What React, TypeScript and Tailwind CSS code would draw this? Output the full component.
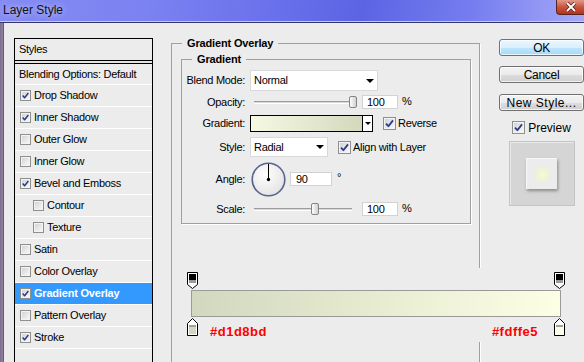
import React from "react";

function Check({ checked, small }: { checked?: boolean; small?: boolean }) {
  return (
    <span
      className={
        (small ? "w-[11px] h-[11px]" : "w-[13px] h-[13px]") +
        " relative inline-block shrink-0 border border-[#8e8f8f] bg-[linear-gradient(135deg,#d0d0d0,#fbfbfb)]"
      }
    >
      <span className="absolute inset-0 border border-[#f3f3f3]" />
      {checked && (
        <svg viewBox="0 0 11 11" className="absolute inset-0 w-full h-full">
          <path
            d="M2 5.6L4.4 8.2L9 2.4"
            fill="none"
            stroke="#2a3a8a"
            strokeWidth="1.8"
            strokeLinejoin="round"
          />
        </svg>
      )}
    </span>
  );
}

function Tri({ small }: { small?: boolean }) {
  return (
    <span
      className={
        small
          ? "w-0 h-0 border-x-[3px] border-x-transparent border-t-[3px] border-t-black"
          : "w-0 h-0 border-x-[4px] border-x-transparent border-t-[4px] border-t-black"
      }
    />
  );
}

function Slider({ thumb }: { thumb: string }) {
  return (
    <div className="relative ml-[4px] w-[104px] h-[14px]">
      <div className="absolute left-0 w-[98px] top-[6px] h-[3px] border-t border-t-[#9c9c9c] border-b border-b-white bg-[#d8d8d8]" />
      <div
        className={
          thumb +
          " absolute top-[1px] w-[8px] h-[12px] rounded-[2px] border border-[#858585] bg-[linear-gradient(90deg,#fdfdfd,#d0d0d0)]"
        }
      />
    </div>
  );
}

function NumBox({ value, wide }: { value: string; wide?: boolean }) {
  return (
    <div
      className={
        (wide ? "w-[42px] pl-[5px]" : "w-[36px] pl-[4px]") +
        " h-[14px] bg-white border border-[#d2d2d2] flex items-center leading-none"
      }
    >
      {value}
    </div>
  );
}

function Label({ children }: { children: React.ReactNode }) {
  return <div className="w-[63px] text-right shrink-0">{children}</div>;
}

function TopStop() {
  return (
    <svg width="11" height="17" viewBox="0 0 11 17">
      <path d="M0.5 0.5H10.5V12.5L5.5 16.5L0.5 12.5Z" fill="#fff" stroke="#000" />
      <rect x="2" y="2" width="7" height="6" fill="#000" />
      <rect x="2" y="8" width="7" height="3" fill="#9a9a9a" />
    </svg>
  );
}

function BottomStop({ color }: { color: string }) {
  return (
    <svg width="11" height="18" viewBox="0 0 11 18">
      <path d="M5.5 0.5L10.5 5.5V17.5H0.5V5.5Z" fill="#fff" stroke="#000" />
      <rect x="2" y="7" width="7" height="2" fill="#a0a0a0" />
      <rect x="2" y="9" width="7" height="7" fill={color} />
    </svg>
  );
}

const items: { label: string; checked?: boolean; sub?: boolean; active?: boolean }[] = [
  { label: "Drop Shadow", checked: true },
  { label: "Inner Shadow", checked: true },
  { label: "Outer Glow" },
  { label: "Inner Glow" },
  { label: "Bevel and Emboss", checked: true },
  { label: "Contour", sub: true },
  { label: "Texture", sub: true },
  { label: "Satin" },
  { label: "Color Overlay" },
  { label: "Gradient Overlay", checked: true, active: true },
  { label: "Pattern Overlay" },
  { label: "Stroke", checked: true },
];

const btn =
  "h-[17px] rounded-[3px] border flex items-center justify-center text-[12px] text-black shadow-[inset_0_0_0_1px_rgba(255,255,255,0.75)]";
const grayBtn =
  " border-[#707070] bg-[linear-gradient(#f3f3f3_0%,#ebebeb_50%,#dddddd_51%,#cfcfcf_100%)]";

export default function App() {
  return (
    <div className="relative w-[584px] h-[362px] overflow-hidden bg-[#ececec] text-black text-[11px] tracking-[-0.3px] [font-family:'Liberation_Sans',Arial,sans-serif]">
      {/* Title bar */}
      <div className="h-[21px] flex items-start justify-between bg-[linear-gradient(100deg,#858bf3_0%,#7b82f1_25%,#6b72ec_45%,#5d64e4_62%,#747cef_80%,#a4a9f7_100%)]">
        <span className="pl-[3px] pt-[3px] text-[12px] leading-[14px] tracking-normal text-[#111] [text-shadow:0_0_6px_rgba(255,255,255,0.7)]">
          Layer Style
        </span>
        <div className="w-[28px] h-[15px] rounded-bl-[4px] border-l border-b border-[#5a2520] bg-[linear-gradient(#e39a88,#c9553f_50%,#b3321e)] flex items-center justify-center">
          <svg width="12" height="10" viewBox="0 0 12 10">
            <path d="M2 1L10 9M10 1L2 9" stroke="#4a1a14" strokeWidth="3.4" />
            <path d="M2 1L10 9M10 1L2 9" stroke="#fff" strokeWidth="2" />
          </svg>
        </div>
      </div>
      <div className="h-px bg-[#c3c6fb]" />
      <div className="h-px bg-[#34356a]" />

      {/* Body */}
      <div className="flex">
        <div className="w-[4px] h-[339px] shrink-0 bg-[linear-gradient(90deg,#7d6c86,#8f82a8_60%,#4e4a66)]" />

        {/* Styles list */}
        <div className="ml-[10px] mt-[15px] w-[139px] h-[330px] shrink-0 border-l border-r border-t border-black">
          <div className="h-[22px] flex items-center pl-[4px] border-b border-black">Styles</div>
          <div className="h-[2px] bg-[#e2e2e2]" />
          <div className="h-[22px] flex items-center pl-[4px] border-t border-black border-b border-b-white">
            Blending Options: Default
          </div>
          {items.map((it) => (
            <div
              key={it.label}
              className={
                (it.sub ? "pl-[18px]" : "pl-[5px]") +
                (it.active ? " bg-[#3399ff] text-white font-bold tracking-[-0.2px]" : "") +
                " h-[22px] flex items-center gap-[3px] border-b border-white"
              }
            >
              <Check checked={it.checked} small />
              <span>{it.label}</span>
            </div>
          ))}
        </div>

        {/* Center settings */}
        <div className="ml-[18px] mt-[14px] w-[309px] shrink-0">
          <fieldset className="h-[340px] border border-[#a0a0a0] shadow-[1px_1px_0_#fff]">
            <legend className="ml-[10px] px-[5px] font-bold text-[11px] leading-[13px] tracking-[-0.15px]">
              Gradient Overlay
            </legend>
            <fieldset className="mt-[3px] ml-[9px] w-[290px] border border-[#a0a0a0] shadow-[1px_1px_0_#fff] pb-[7px]">
              <legend className="ml-[10px] px-[5px] font-bold text-[11px] leading-[13px] tracking-[-0.15px]">
                Gradient
              </legend>
              <div className="flex flex-col">
                <div className="mt-[4px] h-[21px] flex items-center">
                  <Label>Blend Mode:</Label>
                  <div className="ml-[5px] w-[128px] h-[21px] bg-white border border-[#d9d9d9] flex items-center justify-between pl-[3px] pr-[3px]">
                    <span>Normal</span>
                    <Tri />
                  </div>
                </div>
                <div className="mt-[4px] h-[14px] flex items-center">
                  <Label>Opacity:</Label>
                  <div className="ml-[5px] flex items-center">
                    <Slider thumb="left-[95px]" />
                    <div className="ml-[4px]">
                      <NumBox value="100" />
                    </div>
                    <span className="ml-[4px] self-start leading-[12px]">%</span>
                  </div>
                </div>
                <div className="mt-[6px] h-[17px] flex items-center">
                  <Label>Gradient:</Label>
                  <div className="ml-[5px] w-[123px] h-[17px] border border-black flex">
                    <div className="flex-1 bg-[linear-gradient(90deg,#f6f9e3,#d3d9bd)]" />
                    <div className="w-[10px] border-l border-black bg-white flex items-center justify-center">
                      <Tri small />
                    </div>
                  </div>
                  <div className="ml-[10px] flex items-center gap-[2px]">
                    <Check checked />
                    <span>Reverse</span>
                  </div>
                </div>
                <div className="mt-[5px] h-[20px] flex items-center">
                  <Label>Style:</Label>
                  <div className="ml-[5px] w-[78px] h-[20px] bg-white border border-[#d9d9d9] flex items-center justify-between pl-[3px] pr-[3px]">
                    <span>Radial</span>
                    <Tri />
                  </div>
                  <div className="ml-[10px] flex items-center gap-[2px]">
                    <Check checked />
                    <span>Align with Layer</span>
                  </div>
                </div>
                <div className="mt-[5px] h-[34px] flex items-center">
                  <Label>Angle:</Label>
                  <div className="ml-[6px]">
                    <svg width="35" height="35" viewBox="0 0 35 35" className="block">
                      <defs>
                        <radialGradient id="dialg" cx="40%" cy="35%" r="70%">
                          <stop offset="0" stopColor="#ffffff" />
                          <stop offset="1" stopColor="#e2e2e2" />
                        </radialGradient>
                      </defs>
                      <circle cx="17.5" cy="17.5" r="16.3" fill="url(#dialg)" stroke="#58648f" strokeWidth="1.6" />
                      <line x1="17.5" y1="17.5" x2="17.5" y2="2" stroke="#000" strokeWidth="1" />
                      <circle cx="17.5" cy="17.5" r="1.7" fill="#000" />
                    </svg>
                  </div>
                  <div className="ml-[4px] h-[14px] flex items-start">
                    <NumBox value="90" wide />
                    <span className="ml-[5px] leading-[10px]">°</span>
                  </div>
                </div>
                <div className="mt-[6px] h-[14px] flex items-center">
                  <Label>Scale:</Label>
                  <div className="ml-[5px] flex items-center">
                    <Slider thumb="left-[57px]" />
                    <div className="ml-[4px]">
                      <NumBox value="100" />
                    </div>
                    <span className="ml-[4px] self-start leading-[12px]">%</span>
                  </div>
                </div>
              </div>
            </fieldset>
          </fieldset>
        </div>

        {/* Right column */}
        <div className="ml-[19px] w-[85px] shrink-0 pt-[16px] flex flex-col">
          <div
            className={
              btn +
              " border-[#3c7fb1] bg-[linear-gradient(#eaf6fd_0%,#d9f0fc_50%,#bee6fd_51%,#a7d9f5_100%)] shadow-[inset_0_0_0_1px_rgba(255,255,255,0.8),0_0_2px_#5fb6ee]"
            }
          >
            OK
          </div>
          <div className={btn + grayBtn + " mt-[10px]"}>Cancel</div>
          <div className={btn + grayBtn + " mt-[11px] tracking-[0.5px]"}>New Style...</div>
          <div className="mt-[10px] h-[13px] flex items-center justify-center gap-[3px] text-[12px] tracking-normal">
            <Check checked />
            <span>Preview</span>
          </div>
          <div className="mt-[7px] mx-auto w-[66px] h-[65px] bg-[#d5d5d5] border border-[#c4c4c4] shadow-[inset_1px_1px_0_#e9e9e9] flex items-center justify-center">
            <div className="w-[31px] h-[31px] bg-[#ececec] border-t border-l border-[#f8f8f8] shadow-[1px_2px_3px_rgba(0,0,0,0.35)] flex items-center justify-center">
              <div className="w-[13px] h-[13px] bg-[radial-gradient(circle,#f5fad8_0%,#eff4d2_55%,#ececec_100%)]" />
            </div>
          </div>
        </div>
      </div>

      {/* Gradient editor annotation overlay */}
      <div className="absolute left-[185px] top-[268px] w-[382px] h-[74px] bg-[#ececec] px-[2px] pt-[4px] flex flex-col tracking-normal">
        <div className="h-[17px] flex justify-between">
          <TopStop />
          <TopStop />
        </div>
        <div className="mt-[1px] ml-[4px] w-[370px] h-[27px] border border-[#9a9a9a] bg-[linear-gradient(90deg,#d1d8bd,#fdffe5)]" />
        <div className="mt-[1px] h-[18px] flex items-start">
          <BottomStop color="#d1d8bd" />
          <span className="ml-[12px] mt-[6px] leading-[15px] text-[13px] font-bold tracking-[0.5px] text-[#ff0000]">
            #d1d8bd
          </span>
          <span className="ml-auto mr-[16px] mt-[6px] leading-[15px] text-[13px] font-bold tracking-[0.5px] text-[#ff0000]">
            #fdffe5
          </span>
          <BottomStop color="#fdffe5" />
        </div>
      </div>
    </div>
  );
}
